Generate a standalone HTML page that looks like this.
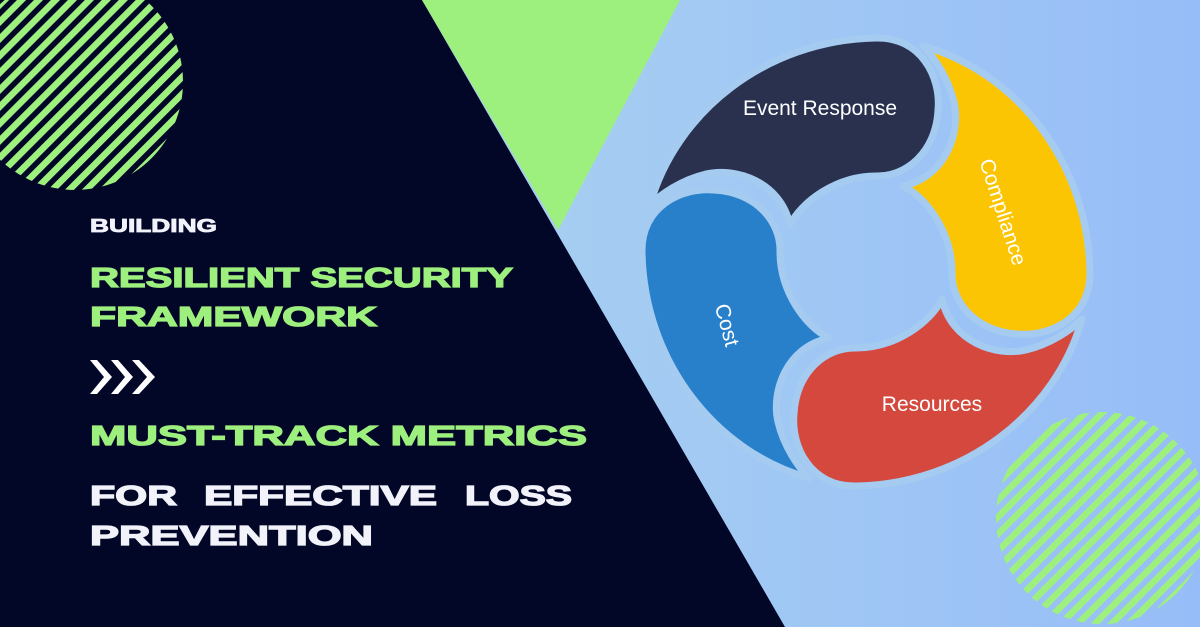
<!DOCTYPE html>
<html><head><meta charset="utf-8"><style>
html,body{margin:0;padding:0;width:1200px;height:627px;overflow:hidden}
svg{display:block}
</style></head><body>
<svg width="1200" height="627" viewBox="0 0 1200 627" xmlns="http://www.w3.org/2000/svg">
<defs>
<linearGradient id="bg" x1="0" y1="0" x2="1" y2="0">
<stop offset="0" stop-color="#b2dcec"/><stop offset="1" stop-color="#97bdf8"/>
</linearGradient>
<pattern id="str" width="12" height="12" patternUnits="userSpaceOnUse" patternTransform="rotate(45)">
<rect x="0" y="0" width="6.5" height="12" fill="#9ef07e"/>
</pattern>
<clipPath id="c1"><circle cx="75" cy="82" r="108"/></clipPath>
<clipPath id="c2"><circle cx="1102" cy="518" r="106"/></clipPath>
</defs>
<rect width="1200" height="627" fill="url(#bg)"/>
<polygon points="0,0 422,0 785,627 0,627" fill="#020627"/>
<polygon points="422,0 680,0 558,230" fill="#9ef07e"/>
<g clip-path="url(#c1)"><rect x="-40" y="-40" width="240" height="240" fill="url(#str)"/></g>
<g clip-path="url(#c2)"><rect x="990" y="405" width="220" height="230" fill="url(#str)"/></g>

<g transform="translate(866,262)" stroke="#a5ccf0" stroke-width="7" stroke-linejoin="round">
<path d="M -216,-57 C -190,-150 -100,-222 10,-224 C 55,-225 75,-185 72,-152 C 70,-110 40,-85 10,-86 C -30,-86 -65,-60 -76,-37 C -85,-80 -130,-95 -160,-88 C -185,-82 -205,-68 -216,-57 Z" fill="#29314f"/>
<path d="M -216,-57 C -190,-150 -100,-222 10,-224 C 55,-225 75,-185 72,-152 C 70,-110 40,-85 10,-86 C -30,-86 -65,-60 -76,-37 C -85,-80 -130,-95 -160,-88 C -185,-82 -205,-68 -216,-57 Z" fill="#fcc504" transform="rotate(90)"/>
<path d="M -216,-57 C -190,-150 -100,-222 10,-224 C 55,-225 75,-185 72,-152 C 70,-110 40,-85 10,-86 C -30,-86 -65,-60 -76,-37 C -85,-80 -130,-95 -160,-88 C -185,-82 -205,-68 -216,-57 Z" fill="#d5483e" transform="rotate(180)"/>
<path d="M -216,-57 C -190,-150 -100,-222 10,-224 C 55,-225 75,-185 72,-152 C 70,-110 40,-85 10,-86 C -30,-86 -65,-60 -76,-37 C -85,-80 -130,-95 -160,-88 C -185,-82 -205,-68 -216,-57 Z" fill="#2880cb" transform="rotate(270)"/>
</g>

<g font-family="Liberation Sans, sans-serif" fill="#fff" font-size="21">
<text x="820" y="115" text-anchor="middle">Event Response</text>
<text x="932" y="411" text-anchor="middle">Resources</text>
<text transform="translate(1003,212) rotate(72)" text-anchor="middle" y="7">Compliance</text>
<text transform="translate(727,325) rotate(75)" text-anchor="middle" y="7">Cost</text>
</g>

<g font-family="Liberation Sans, sans-serif" font-weight="bold" stroke-width="1.3">
<text x="90" y="232" font-size="18" fill="#f2f3fa" stroke="#f2f3fa" stroke-width="0.8" textLength="127" lengthAdjust="spacingAndGlyphs">BUILDING</text>
<text x="90" y="287" font-size="28" fill="#9ef07e" stroke="#9ef07e" textLength="423" lengthAdjust="spacingAndGlyphs">RESILIENT SECURITY</text>
<text x="90" y="326" font-size="28" fill="#9ef07e" stroke="#9ef07e" textLength="287" lengthAdjust="spacingAndGlyphs">FRAMEWORK</text>
<text x="90" y="445" font-size="28" fill="#9ef07e" stroke="#9ef07e" textLength="497" lengthAdjust="spacingAndGlyphs">MUST-TRACK METRICS</text>
<text x="90" y="505" font-size="28" fill="#f2f3fa" stroke="#f2f3fa" textLength="87" lengthAdjust="spacingAndGlyphs">FOR</text>
<text x="204" y="505" font-size="28" fill="#f2f3fa" stroke="#f2f3fa" textLength="233" lengthAdjust="spacingAndGlyphs">EFFECTIVE</text>
<text x="465" y="505" font-size="28" fill="#f2f3fa" stroke="#f2f3fa" textLength="107" lengthAdjust="spacingAndGlyphs">LOSS</text>
<text x="90" y="545" font-size="28" fill="#f2f3fa" stroke="#f2f3fa" textLength="283" lengthAdjust="spacingAndGlyphs">PREVENTION</text>
</g>
<g fill="#fff">
<polygon points="90,360 97,360 112,377 97,394 90,394 104,377"/>
<polygon points="111,360 118,360 133,377 118,394 111,394 125,377"/>
<polygon points="132,360 139,360 155,377 139,394 132,394 147,377"/>
</g>
</svg>
</body></html>
